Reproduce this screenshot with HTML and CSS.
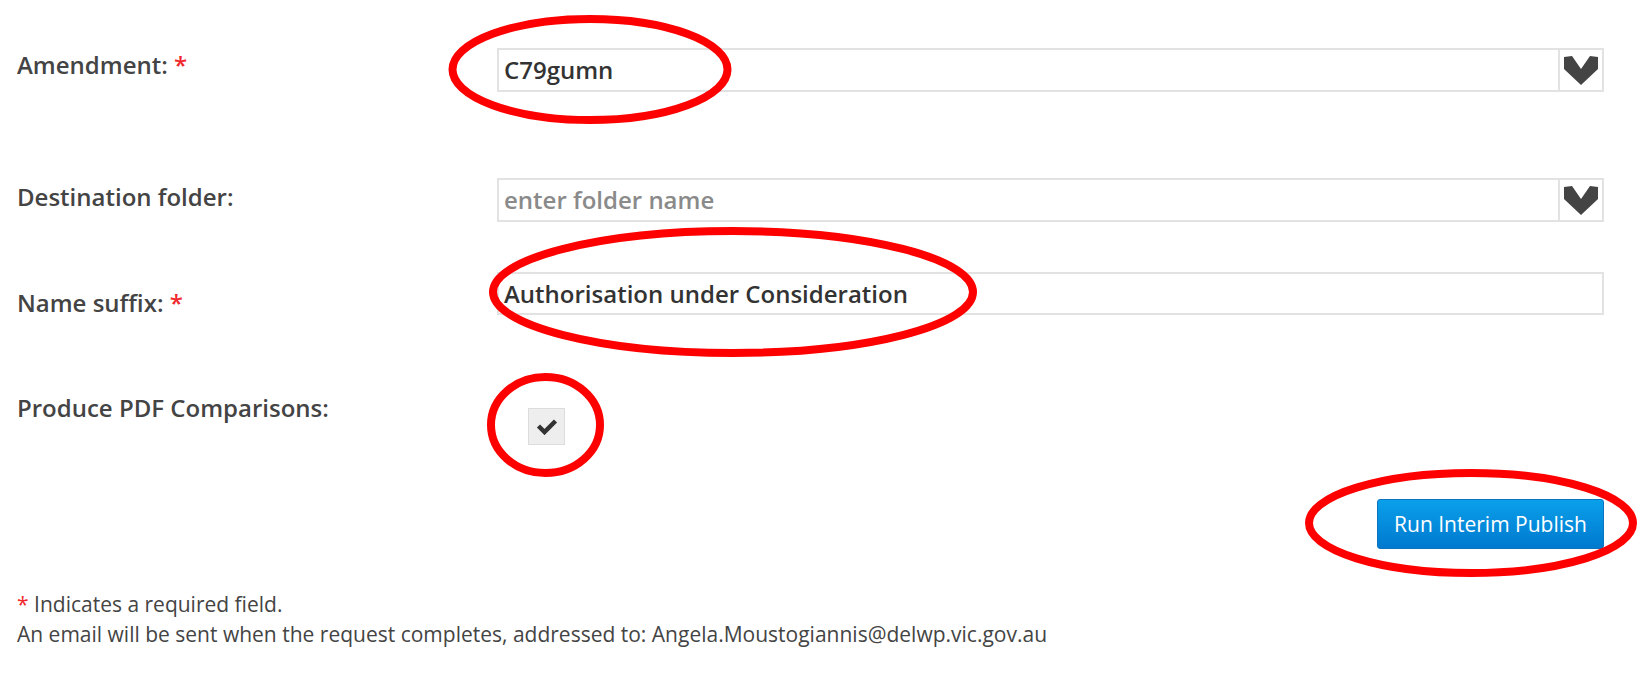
FILE: index.html
```html
<!DOCTYPE html>
<html lang="en">
<head>
<meta charset="utf-8">
<title>Interim Publish</title>
<link rel="stylesheet" href="styles.css">
</head>
<body>
<div class="page">
  <form class="form">
    <div class="row row-amend">
      <label class="label">Amendment: <span class="req">*</span></label>
      <div class="combo">
        <div class="combo-input">C79gumn</div>
        <div class="combo-btn">
          <svg width="34" height="29" viewBox="0 0 34 29"><polygon points="0,1 8,0 17,13 26,0 34,1 34,13 17,29 0,13" fill="#444"/></svg>
        </div>
      </div>
    </div>
    <div class="row row-dest">
      <label class="label">Destination folder:</label>
      <div class="combo">
        <div class="combo-input placeholder">enter folder name</div>
        <div class="combo-btn">
          <svg width="34" height="29" viewBox="0 0 34 29"><polygon points="0,1 8,0 17,13 26,0 34,1 34,13 17,29 0,13" fill="#444"/></svg>
        </div>
      </div>
    </div>
    <div class="row row-suffix">
      <label class="label">Name suffix: <span class="req">*</span></label>
      <div class="text-input">Authorisation under Consideration</div>
    </div>
    <div class="row row-pdf">
      <label class="label">Produce PDF Comparisons:</label>
      <div class="checkbox">
        <svg width="22" height="17" viewBox="0 0 22 17"><polyline points="2.5,8 8.5,14 19.5,3" fill="none" stroke="#333" stroke-width="4.5"/></svg>
      </div>
    </div>
    <div class="actions">
      <button type="button" class="btn-primary">Run Interim Publish</button>
    </div>
  </form>
  <div class="notes">
    <div><span class="req">*</span> Indicates a required field.</div>
    <div>An email will be sent when the request completes, addressed to: Angela.Moustogiannis@delwp.vic.gov.au</div>
  </div>
  <svg class="annotations" width="1648" height="678" viewBox="0 0 1648 678">
    <g fill="none" stroke="#f00" stroke-width="8">
      <ellipse cx="590" cy="69.5" rx="137.5" ry="50.5"/>
      <ellipse cx="733" cy="292" rx="240" ry="61"/>
      <ellipse cx="545.5" cy="425" rx="54.5" ry="48"/>
      <ellipse cx="1471" cy="523" rx="162" ry="50"/>
    </g>
  </svg>
</div>
</body>
</html>
```
FILE: styles.css
```css
html, body {
  margin: 0;
  padding: 0;
  background: #fff;
}
body {
  font-family: "Open Sans", "Liberation Sans", sans-serif;
  color: #444;
}
.page {
  position: relative;
  width: 1648px;
  height: 678px;
  overflow: hidden;
}
.form {
  padding: 48px 44px 0 17px;
}
.row {
  display: flex;
  align-items: flex-start;
}
.label {
  width: 480px;
  flex: none;
  font-size: 24px;
  font-weight: 600;
  line-height: 30px;
  color: #444;
}
.req {
  color: #f0282d;
}
.row-amend .label { padding-top: 2px; }
.row-dest { margin-top: 86px; }
.row-dest .label { padding-top: 4px; }
.row-suffix { margin-top: 50px; }
.row-suffix .label { padding-top: 16px; }
.row-pdf { margin-top: 75px; }
.combo {
  flex: 1;
  display: flex;
  height: 44px;
  box-sizing: border-box;
  border: 2px solid #e2e2e2;
}
.combo-input {
  flex: 1;
  padding-left: 5px;
  font-size: 24px;
  font-weight: 600;
  line-height: 40px;
  color: #333;
}
.placeholder {
  color: #8a8a8a;
}
.combo-btn {
  width: 42px;
  flex: none;
  border-left: 2px solid #e2e2e2;
  display: flex;
  align-items: center;
  justify-content: center;
}
.text-input {
  flex: 1;
  height: 43px;
  box-sizing: border-box;
  border: 2px solid #e2e2e2;
  padding-left: 5px;
  font-size: 24px;
  font-weight: 600;
  line-height: 39px;
  color: #333;
}
.checkbox {
  margin: 15px 0 0 31px;
  width: 37px;
  height: 37px;
  box-sizing: border-box;
  border: 1px solid #dcdcdc;
  background: #eeeeee;
  display: flex;
  align-items: center;
  justify-content: center;
}
.actions {
  display: flex;
  justify-content: flex-end;
  margin-top: 54px;
}
.btn-primary {
  width: 227px;
  height: 50px;
  border: 1px solid #0a74bf;
  border-radius: 3px;
  background: linear-gradient(#0aa0ea, #0079cf);
  color: #fff;
  font-family: "Open Sans", "Liberation Sans", sans-serif;
  font-size: 21px;
  font-weight: 400;
  padding: 0;
}
.notes {
  padding: 40px 0 0 17px;
  font-size: 21px;
  line-height: 30px;
  color: #444;
}
.annotations {
  position: absolute;
  left: 0;
  top: 0;
  pointer-events: none;
}
```
